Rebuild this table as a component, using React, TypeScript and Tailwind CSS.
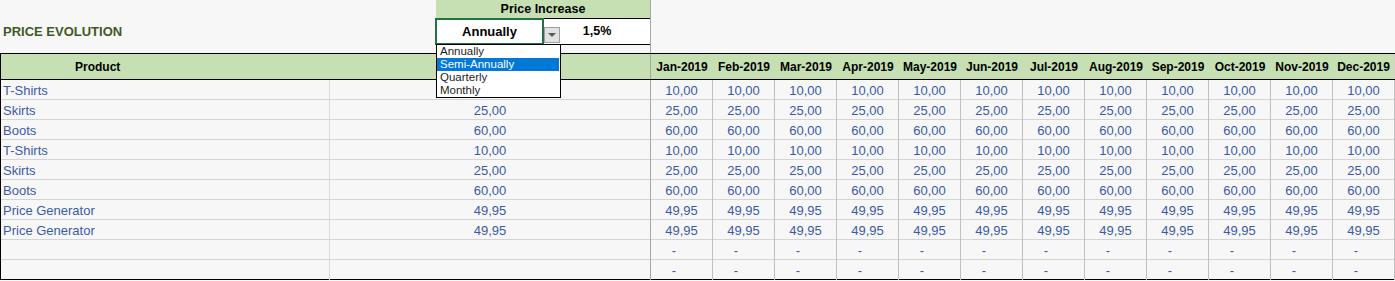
import React from 'react';

const months = [
  'Jan-2019', 'Feb-2019', 'Mar-2019', 'Apr-2019', 'May-2019', 'Jun-2019',
  'Jul-2019', 'Aug-2019', 'Sep-2019', 'Oct-2019', 'Nov-2019', 'Dec-2019',
];

// first price cell sits under the open dropdown, so it shows nothing
const rows: { product: string; price: string; hidePrice?: boolean }[] = [
  { product: 'T-Shirts', price: '10,00', hidePrice: true },
  { product: 'Skirts', price: '25,00' },
  { product: 'Boots', price: '60,00' },
  { product: 'T-Shirts', price: '10,00' },
  { product: 'Skirts', price: '25,00' },
  { product: 'Boots', price: '60,00' },
  { product: 'Price Generator', price: '49,95' },
  { product: 'Price Generator', price: '49,95' },
  { product: '', price: '' },
  { product: '', price: '' },
];

const options = ['Annually', 'Semi-Annually', 'Quarterly', 'Monthly'];

export default function App() {
  return (
    <div
      className="relative w-[1395px] h-[281px] overflow-hidden bg-[#f7f7f7] text-black"
      style={{ fontFamily: '"Liberation Sans", Arial, sans-serif' }}
    >
      {/* top area */}
      <div className="flex h-[53px]">
        <div className="w-[436px] pl-[3px] pt-[24px]">
          <h1 className="text-[13px] leading-[15px] font-bold text-[#3f5a24]">PRICE EVOLUTION</h1>
        </div>
        <div className="relative w-[215px] h-full border-r border-[#a6a6a6]">
          <div className="h-[18px] bg-[#c6e0b4] text-center text-[12.5px] leading-[18px] font-bold">
            Price Increase
          </div>
          <div className="flex h-[27px] bg-white border-y border-black">
            <div className="w-[109px] -ml-px -mt-px -mb-px border-2 border-[#217346] flex items-center justify-center text-[13px] font-bold">
              Annually
            </div>
            <div className="relative flex-1 flex items-center justify-center text-[12.5px] font-bold">
              1,5%
              <div className="absolute left-0 top-[8px] w-[16px] h-[16px] bg-[#e1e1e1] border border-[#a0a0a0] flex items-center justify-center">
                <div className="w-0 h-0 border-l-[4px] border-r-[4px] border-t-[4px] border-l-transparent border-r-transparent border-t-[#595959]" />
              </div>
            </div>
          </div>

          {/* dropdown list */}
          <div className="absolute z-10 left-0 top-[44px] w-[125px] h-[54px] bg-white border border-black">
            {options.map((o, i) => (
              <div
                key={o}
                className={`h-[13px] pl-[3px] text-[11.5px] leading-[13px] ${
                  i === 1 ? 'bg-[#0078d7] text-white mr-px' : 'text-[#1e1e1e]'
                }`}
              >
                {o}
              </div>
            ))}
          </div>
        </div>
      </div>

      {/* table */}
      <div className="w-[1395px] border-l border-black">
        <div className="grid grid-cols-[329px_321px_repeat(12,62px)] h-[27px] bg-[#c6e0b4] border-y border-black text-[12px] font-bold">
          <div className="pl-[74px] flex items-center">Product</div>
          <div className="border-r border-[#a6a6a6]" />
          {months.map((m, i) => (
            <div
              key={m}
              className={`flex items-center justify-center ${i === 11 ? 'border-r border-[#d0d0d0]' : ''}`}
            >
              {m}
            </div>
          ))}
        </div>

        {rows.map((r, ri) => (
          <div
            key={ri}
            className={`grid grid-cols-[329px_321px_repeat(12,62px)] h-[20px] border-b text-[13px] leading-[19px] text-[#3a5aa8] ${
              ri === rows.length - 1 ? 'border-black' : 'border-[#d4d4d4]'
            }`}
          >
            <div className="pl-[2px] border-r border-[#dadada] pt-px">{r.product}</div>
            <div className="text-center border-r border-[#a6a6a6] pt-px">{r.hidePrice ? '' : r.price}</div>
            {months.map((m) => (
              <div key={m} className="text-center border-r border-[#c0c0c0] pt-px">
                {r.price ? r.price : <span className="pr-[15px]">-</span>}
              </div>
            ))}
          </div>
        ))}
      </div>
    </div>
  );
}
